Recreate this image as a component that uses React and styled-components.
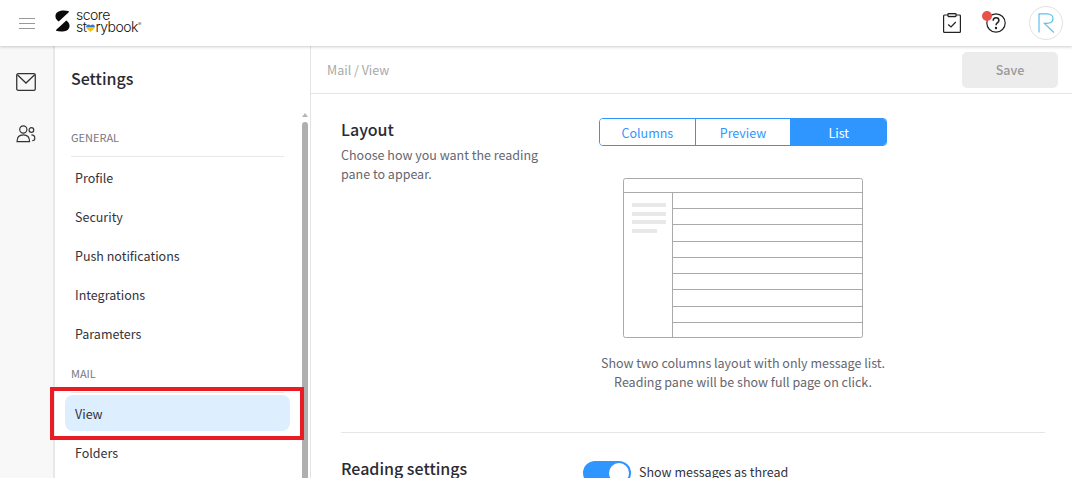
import React from 'react'
import styled, { createGlobalStyle } from 'styled-components'

const GlobalStyle = createGlobalStyle`
  html, body {
    margin: 0;
    height: 100%;
    overflow: hidden;
    background: #fff;
    font-family: "Noto Sans CJK KR", "Noto Sans", sans-serif;
  }
  * { box-sizing: border-box; }
`

const Page = styled.div`
  position: relative;
  width: 1072px;
  height: 478px;
  overflow: hidden;
  display: flex;
  flex-direction: column;
`

const TopBar = styled.header`
  height: 46px;
  flex: none;
  display: flex;
  align-items: center;
  padding: 0 9px 0 19px;
  background: #fff;
  box-shadow: 0 1px 3px rgba(0, 0, 0, 0.2);
  position: relative;
  z-index: 2;
`

const Burger = styled.div`
  width: 16px;
  height: 11px;
  border-top: 1px solid #999;
  border-bottom: 1px solid #999;
  position: relative;
  margin-right: 20px;
  &::after {
    content: '';
    position: absolute;
    left: 0;
    right: 0;
    top: 4px;
    height: 1px;
    background: #999;
  }
`

const Logo = styled.div`
  display: flex;
  align-items: center;
  gap: 6px;
  margin-bottom: 4px;
`

const LogoWords = styled.div`
  font-family: Inter, sans-serif;
  font-weight: 300;
  font-size: 14px;
  line-height: 12px;
  letter-spacing: -0.5px;
  color: #111;
`

const LogoLine = styled.div`
  display: flex;
  align-items: center;
  sup {
    font-size: 5px;
    line-height: 5px;
    align-self: flex-start;
    margin-top: 1px;
  }
`

const TopActions = styled.div`
  margin-left: auto;
  display: flex;
  align-items: center;
`

const ActionIcon = styled.div`
  position: relative;
  display: flex;
  width: ${p => p.$size}px;
  height: 20px;
  margin-right: ${p => p.$gap}px;
`

const Dot = styled.span`
  position: absolute;
  top: -2px;
  left: -4px;
  width: 10px;
  height: 10px;
  border-radius: 50%;
  background: #e8524a;
`

const Avatar = styled.div`
  width: 34px;
  height: 34px;
  border-radius: 50%;
  border: 1px solid #e2e2e2;
  display: flex;
  align-items: center;
  justify-content: center;
`

const Body = styled.div`
  flex: 1;
  display: flex;
  min-height: 0;
`

const Rail = styled.nav`
  width: 55px;
  flex: none;
  background: #f8f8f8;
  border-right: 2px solid #e8e8e8;
  display: flex;
  flex-direction: column;
  align-items: center;
  gap: 34px;
  padding: 27px 2px 0 0;
`

const Sidebar = styled.aside`
  position: relative;
  width: 256px;
  flex: none;
  border-right: 1px solid #e4e4e4;
  padding: 0 10px;
  overflow: hidden;
`

const SideTitle = styled.h2`
  margin: 20px 0 0 6px;
  font-size: 16px;
  line-height: 24px;
  font-weight: 500;
  color: #2a2a33;
`

const Group = styled.div`
  margin: ${p => p.$top}px 16px 2px 6px;
  padding-bottom: 12px;
  border-bottom: 1px solid #e8e8e8;
  font-size: 11px;
  line-height: 14px;
  color: #77777f;
`

const Item = styled.div`
  height: 36px;
  margin-bottom: 3px;
  width: 225px;
  padding-left: 10px;
  display: flex;
  align-items: center;
  border-radius: 8px;
  font-size: 12.5px;
  color: #33333c;
  background: ${p => (p.$active ? '#ddeeff' : 'transparent')};
`

const Scrollbar = styled.div`
  position: absolute;
  top: 67px;
  right: 2px;
  bottom: 0;
  width: 6px;
  &::before {
    content: '';
    position: absolute;
    top: 0;
    left: 0;
    border-left: 3px solid transparent;
    border-right: 3px solid transparent;
    border-bottom: 4px solid #b5b5b5;
  }
  &::after {
    content: '';
    position: absolute;
    top: 9px;
    bottom: 0;
    left: 0;
    right: 0;
    border-radius: 3px 3px 0 0;
    background: #afafaf;
  }
`

const Main = styled.main`
  flex: 1;
  min-width: 0;
`

const MainHead = styled.div`
  height: 48px;
  display: flex;
  align-items: center;
  justify-content: space-between;
  padding: 0 14px 0 16px;
  border-bottom: 1px solid #e6e6e6;
  font-size: 12.5px;
  color: #a9a9a9;
`

const SaveButton = styled.button`
  width: 96px;
  height: 36px;
  border: none;
  border-radius: 5px;
  background: #ececec;
  color: #9a9a9a;
  font: 500 12.5px "Noto Sans CJK KR", sans-serif;
`

const Content = styled.div`
  padding: 24px 27px 0 30px;
`

const Row = styled.section`
  display: grid;
  grid-template-columns: 242px 320px;
`

const Heading = styled.h3`
  margin: -1px 0 0;
  font-size: 16px;
  line-height: 24px;
  font-weight: 500;
  color: #2a2a33;
`

const Hint = styled.p`
  margin: 4px 0 0;
  width: 210px;
  font-size: 12.5px;
  line-height: 19px;
  color: #66666e;
`

const Center = styled.div`
  display: flex;
  flex-direction: column;
  align-items: center;
`

const Segments = styled.div`
  display: flex;
  width: 288px;
  height: 28px;
  border: 1px solid #3096ff;
  border-radius: 4px;
  overflow: hidden;
`

const Segment = styled.div`
  flex: 1;
  display: flex;
  align-items: center;
  justify-content: center;
  font-size: 12.5px;
  color: ${p => (p.$active ? '#fff' : '#3096ff')};
  background: ${p => (p.$active ? '#3096ff' : '#fff')};
  & + & {
    border-left: 1px solid #3096ff;
  }
`

const Preview = styled.svg`
  display: block;
  margin-top: 32px;
`

const Caption = styled.p`
  margin: 15px 0 0;
  font-size: 12.5px;
  line-height: 19px;
  text-align: center;
  white-space: nowrap;
  color: #66666e;
`

const Divider = styled.hr`
  margin: 41px 0 0;
  border: none;
  border-top: 1px solid #e6e6e6;
`

const SettingsRow = styled(Row)`
  margin-top: 24px;
`

const ToggleLine = styled.div`
  display: flex;
  align-items: flex-start;
  gap: 8px;
  margin-top: 4px;
  font-size: 12.5px;
  line-height: 22px;
  color: #33333c;
`

const Toggle = styled.div`
  position: relative;
  width: 48px;
  height: 24px;
  border-radius: 12px;
  background: #3096ff;
  &::after {
    content: '';
    position: absolute;
    top: 2px;
    right: 2px;
    width: 20px;
    height: 20px;
    border-radius: 50%;
    background: #fff;
  }
`

const Highlight = styled.div`
  position: absolute;
  left: 50px;
  top: 387px;
  width: 254px;
  height: 53px;
  border: 4px solid #e81c22;
  z-index: 3;
`

const general = ['Profile', 'Security', 'Push notifications', 'Integrations', 'Parameters']
const listRows = [208, 224, 241, 257, 273, 289, 306, 322]

function LogoMark() {
  return (
    <svg width="15" height="22" viewBox="0 0 16 23">
      <path d="M15 1 C9 -0.5 1 0 0.5 6 C0.3 9 2 10.5 4 12 L12 4.5 C13.5 3.5 14.5 2.5 15 1Z" fill="#0a0a0a" />
      <path d="M1 22 C7 23.5 15 23 15.5 17 C15.7 14 14 12.5 12 11 L4 18.5 C2.5 19.5 1.5 20.5 1 22Z" fill="#0a0a0a" />
    </svg>
  )
}

function Heart() {
  return (
    <svg width="9" height="8" viewBox="0 0 9 8" style={{ margin: '2px 0 0' }}>
      <path d="M0.2 2.4 C0.2 0.4 3.2 -0.4 4.5 1.4 C5.8 -0.4 8.8 0.4 8.8 2.4 L8.7 3.6 H0.3Z" fill="#2f7bd0" />
      <path d="M0.3 3.6 H8.7 C8 5.4 6 6.8 4.5 8 C3 6.8 1 5.4 0.3 3.6Z" fill="#f7c600" />
    </svg>
  )
}

function LayoutPreview() {
  return (
    <Preview width="240" height="160" viewBox="0 0 240 160">
      <rect x="0.5" y="0.5" width="239" height="159" rx="2" fill="#fff" stroke="#aaa" />
      <path d="M1 14.5H239M49.5 14.5V159" stroke="#aaa" fill="none" />
      {listRows.map(y => (
        <path key={y} d={`M50 ${y - 177.5}H239`} stroke="#aaa" fill="none" />
      ))}
      <rect x="9" y="25" width="34" height="4" fill="#e8e8e8" />
      <rect x="9" y="34" width="34" height="4" fill="#e8e8e8" />
      <rect x="9" y="42" width="34" height="4" fill="#e8e8e8" />
      <rect x="9" y="51" width="25" height="4" fill="#e8e8e8" />
    </Preview>
  )
}

export default function App() {
  return (
    <Page>
      <GlobalStyle />
      <TopBar>
        <Burger />
        <Logo>
          <LogoMark />
          <LogoWords>
            <LogoLine>score</LogoLine>
            <LogoLine>st<Heart />rybook<sup>®</sup></LogoLine>
          </LogoWords>
        </Logo>
        <TopActions>
          <ActionIcon $size={18} $gap={25}>
            <svg width="18" height="20" viewBox="0 0 18 20" fill="none" stroke="#222" strokeWidth="1.2">
              <path d="M5 2H1.5C1 2 0.6 2.4 0.6 3V18.5C0.6 19 1 19.4 1.5 19.4H16.5C17 19.4 17.4 19 17.4 18.5V3C17.4 2.4 17 2 16.5 2H13" />
              <rect x="5" y="0.6" width="8" height="3" rx="0.5" fill="#ddd" />
              <path d="M5.2 11.5L8 14L12.8 9" />
            </svg>
          </ActionIcon>
          <ActionIcon $size={20} $gap={23}>
            <svg width="20" height="20" viewBox="0 0 20 20" fill="none" stroke="#222" strokeWidth="1.2">
              <circle cx="10" cy="10" r="9.2" />
              <path d="M7.2 7.8C7.2 6 8.5 4.8 10 4.8C11.7 4.8 12.9 5.9 12.9 7.4C12.9 9.6 10 9.6 10 12.2" strokeWidth="1.5" />
              <circle cx="10" cy="15" r="0.6" fill="#222" />
            </svg>
            <Dot />
          </ActionIcon>
          <Avatar>
            <svg width="17" height="20" viewBox="0 0 17 20" fill="none" stroke="#5cc0ec" strokeWidth="1.2">
              <path d="M1 0.5V19.5" />
              <path d="M1 0.8H9C13 0.8 15 3.2 15 5.6C15 8.4 12.6 10.4 8.6 10.4H6.4L15.8 19.5" />
            </svg>
          </Avatar>
        </TopActions>
      </TopBar>
      <Body>
        <Rail>
          <svg width="20" height="18" viewBox="0 0 22 19.8" fill="none" stroke="#333" strokeWidth="1.4">
            <rect x="0.8" y="0.8" width="20.4" height="18.2" rx="1.5" />
            <path d="M1.5 2L11 11L20.5 2" />
          </svg>
          <svg width="20" height="18" viewBox="0 0 22 20" fill="none" stroke="#333" strokeWidth="1.3">
            <circle cx="8" cy="5" r="4" />
            <circle cx="17" cy="5.5" r="2.6" />
            <path d="M1 18.5C1 13.5 4 11 8 11C12 11 15 13.5 15 18.5Z" />
            <path d="M17 11C19.4 11 20.8 12.6 20.8 15C20.8 16.6 19.6 17.4 18 17.4" />
          </svg>
        </Rail>
        <Sidebar>
          <SideTitle>Settings</SideTitle>
          <Group $top={40}>GENERAL</Group>
          {general.map(label => (
            <Item key={label}>{label}</Item>
          ))}
          <Group $top={15}>MAIL</Group>
          <Item $active>View</Item>
          <Item>Folders</Item>
          <Scrollbar />
        </Sidebar>
        <Main>
          <MainHead>
            <span>Mail / View</span>
            <SaveButton>Save</SaveButton>
          </MainHead>
          <Content>
            <Row>
              <div>
                <Heading>Layout</Heading>
                <Hint>Choose how you want the reading pane to appear.</Hint>
              </div>
              <Center>
                <Segments>
                  <Segment>Columns</Segment>
                  <Segment>Preview</Segment>
                  <Segment $active>List</Segment>
                </Segments>
                <LayoutPreview />
                <Caption>
                  Show two columns layout with only message list.
                  <br />
                  Reading pane will be show full page on click.
                </Caption>
              </Center>
            </Row>
            <Divider />
            <SettingsRow>
              <Heading>Reading settings</Heading>
              <ToggleLine>
                <Toggle />
                Show messages as thread
              </ToggleLine>
            </SettingsRow>
          </Content>
        </Main>
      </Body>
      <Highlight />
    </Page>
  )
}
